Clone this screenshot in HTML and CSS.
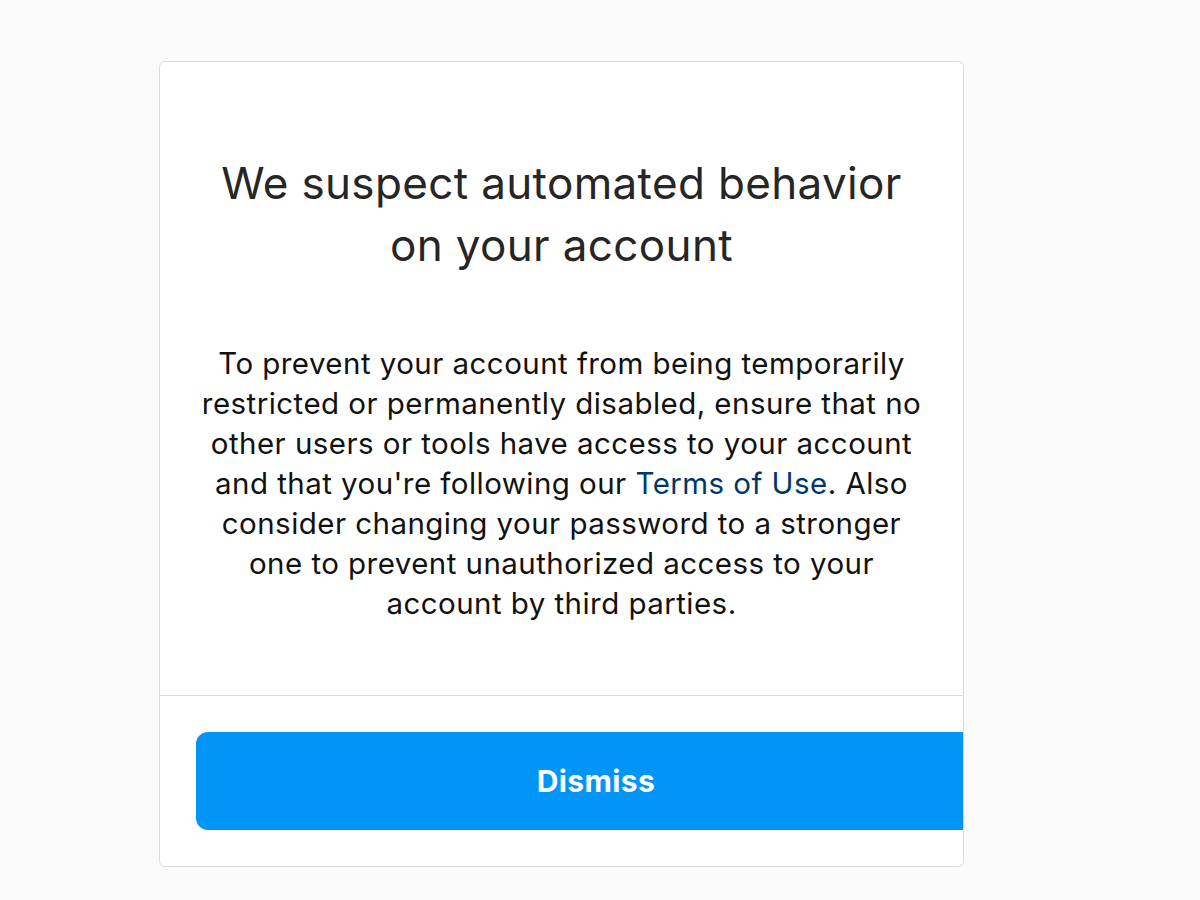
FILE: index.html
```html
<!DOCTYPE html>
<html lang="en">
<head>
<meta charset="utf-8">
<title>Automated behavior</title>
<link rel="stylesheet" href="styles.css">
</head>
<body>
<div class="page">
  <div class="card">
    <div class="content">
      <h1 class="title">We suspect automated behavior<br>on your account</h1>
      <p class="message">To prevent your account from being temporarily restricted or permanently disabled, ensure that no other users or tools have access to your account and that you're following our <a class="link" href="#">Terms of Use</a>. Also consider changing your password to a stronger one to prevent unauthorized access to your account by third parties.</p>
    </div>
    <div class="footer">
      <button class="dismiss" type="button">Dismiss</button>
    </div>
  </div>
</div>
</body>
</html>
```
FILE: styles.css
```css
html, body {
  margin: 0;
  padding: 0;
  background: #fafafa;
}
body {
  font-family: Inter, "Noto Sans", "Liberation Sans", sans-serif;
  color: #262626;
}
.page {
  padding: 61px 0 0 159px;
}
.card {
  box-sizing: border-box;
  width: 805px;
  height: 806px;
  background: #fff;
  border: 1px solid #dbdbdb;
  border-radius: 6px;
  overflow: hidden;
  display: flex;
  flex-direction: column;
}
.content {
  padding: 90px 38px 0;
  height: 634px;
  box-sizing: border-box;
  border-bottom: 1px solid #dbdbdb;
  text-align: center;
}
.title {
  margin: 0;
  font-size: 44px;
  font-weight: 400;
  line-height: 62px;
  color: #262626;
  letter-spacing: 0.35px;
}
.message {
  margin: 67px 0 0;
  font-size: 29.5px;
  line-height: 40px;
  color: #111;
  letter-spacing: 0.45px;
}
.link {
  color: #00376b;
  text-decoration: none;
}
.footer {
  padding: 36px 0 0 36px;
}
.dismiss {
  display: block;
  width: 800px;
  height: 98px;
  border: 0;
  border-radius: 12px;
  background: #0095f6;
  color: #fff;
  font-family: inherit;
  font-size: 30px;
  font-weight: 700;
  letter-spacing: 0.4px;
  padding: 0;
}
```
